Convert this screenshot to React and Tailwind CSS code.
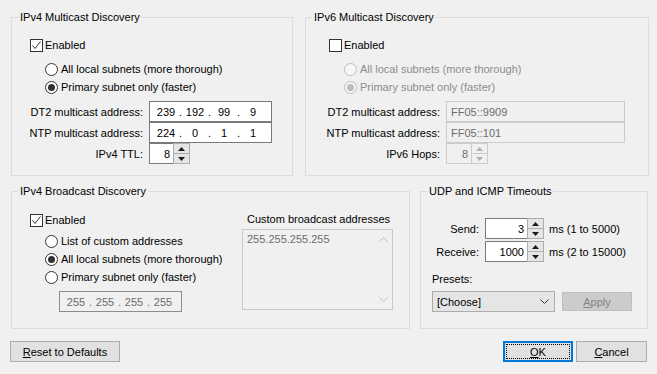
import React from "react";

function Checkbox({ checked }) {
  return (
    <span className="w-[13px] h-[13px] border border-[#333333] bg-white flex items-center justify-center shrink-0">
      {checked && (
        <svg width="11" height="11" viewBox="0 0 11 11">
          <path d="M1.5 5.5 L4 8.5 L9.5 1.5" fill="none" stroke="#333333" strokeWidth="1" />
        </svg>
      )}
    </span>
  );
}

function Radio({ checked, disabled }) {
  return (
    <span
      className={
        disabled
          ? "w-[13px] h-[13px] rounded-full border border-[#bcbcbc] bg-[#f7f7f7] flex items-center justify-center shrink-0"
          : "w-[13px] h-[13px] rounded-full border border-[#333333] bg-white flex items-center justify-center shrink-0"
      }
    >
      {checked && (
        <span
          className={
            disabled
              ? "w-[7px] h-[7px] rounded-full bg-[#bcbcbc]"
              : "w-[7px] h-[7px] rounded-full bg-[#333333]"
          }
        />
      )}
    </span>
  );
}

function RadioRow({ checked, disabled, children }) {
  return (
    <div className="flex items-center h-[18px] gap-[3px]">
      <Radio checked={checked} disabled={disabled} />
      <span className={disabled ? "text-[#8d8d8d]" : ""}>{children}</span>
    </div>
  );
}

function Tri({ up, disabled }) {
  return (
    <svg width="7" height="4" viewBox="0 0 7 4">
      <path
        d={up ? "M0 4 L3.5 0 L7 4 Z" : "M0 0 L3.5 4 L7 0 Z"}
        fill={disabled ? "#b0b0b0" : "#1a1a1a"}
      />
    </svg>
  );
}

function Spin({ value, w, disabled }) {
  return (
    <div className="flex h-[21px]" style={{ width: w }}>
      <div
        className={
          disabled
            ? "flex-1 flex items-center justify-end pr-[3px] border border-r-0 border-[#cccccc] bg-[#f0f0f0] text-[#6d6d6d]"
            : "flex-1 flex items-center justify-end pr-[3px] border border-r-0 border-[#7a7a7a] bg-white"
        }
      >
        {value}
      </div>
      <div className="w-[17px] flex flex-col">
        <div
          className={
            disabled
              ? "flex-1 flex items-center justify-center border border-[#cccccc] bg-[#f0f0f0]"
              : "flex-1 flex items-center justify-center border border-[#adadad] bg-[#e5e5e5]"
          }
        >
          <Tri up disabled={disabled} />
        </div>
        <div
          className={
            disabled
              ? "flex-1 flex items-center justify-center border border-t-0 border-[#cccccc] bg-[#f0f0f0]"
              : "flex-1 flex items-center justify-center border border-t-0 border-[#adadad] bg-[#e5e5e5]"
          }
        >
          <Tri disabled={disabled} />
        </div>
      </div>
    </div>
  );
}

function IpBox({ octets, disabled }) {
  return (
    <div
      className={
        disabled
          ? "w-[123px] h-[21px] flex items-center pl-[4px] border border-[#8c8c8c] bg-[#f0f0f0] text-[#6d6d6d]"
          : "w-[123px] h-[21px] flex items-center pl-[4px] border border-[#7a7a7a] bg-white"
      }
    >
      {octets.map((o, i) => (
        <React.Fragment key={i}>
          {i > 0 && <span className="w-[5px] text-center">.</span>}
          <span className="w-[24px] text-center">{o}</span>
        </React.Fragment>
      ))}
    </div>
  );
}

function TextBox({ value, w }) {
  return (
    <div
      className="h-[21px] flex items-center pl-[4px] border border-[#cccccc] bg-[#f0f0f0] text-[#6d6d6d]"
      style={{ width: w }}
    >
      {value}
    </div>
  );
}

function Btn({ children, w, def }) {
  return (
    <button
      className={
        def
          ? "h-[21px] border-2 border-[#0078d7] bg-[#e1e1e1] p-[1px] flex whitespace-nowrap"
          : "h-[21px] border border-[#adadad] bg-[#e1e1e1] flex items-center justify-center whitespace-nowrap"
      }
      style={{ width: w }}
    >
      {def ? (
        <span className="flex-1 border border-dotted border-black flex items-center justify-center">
          {children}
        </span>
      ) : (
        children
      )}
    </button>
  );
}

export default function App() {
  return (
    <div className="w-[657px] h-[374px] bg-[#f0f0f0] text-black text-[11px] leading-[16px] font-['Liberation_Sans',Arial,sans-serif] overflow-hidden">
      {/* top row */}
      <div className="flex pt-[9px] pl-[11px] gap-[12px]">
        <fieldset className="w-[282px] h-[167px] border border-[#dcdcdc] m-0 p-0 min-w-0">
          <legend className="ml-[6px] px-[2px] leading-[16px]">IPv4 Multicast Discovery</legend>
          <div className="pt-[12px] pl-[18px] flex items-center h-[28px] gap-[2px]">
            <Checkbox checked />
            <span>Enabled</span>
          </div>
          <div className="mt-[7px] pl-[33px]">
            <RadioRow>All local subnets (more thorough)</RadioRow>
            <RadioRow checked>Primary subnet only (faster)</RadioRow>
          </div>
          <div className="mt-[5px] flex flex-col">
            <div className="flex items-center h-[21px]">
              <span className="w-[131px] text-right">DT2 multicast address:</span>
              <div className="ml-[6px]">
                <IpBox octets={["239", "192", "99", "9"]} />
              </div>
            </div>
            <div className="flex items-center h-[21px]">
              <span className="w-[131px] text-right">NTP multicast address:</span>
              <div className="ml-[6px]">
                <IpBox octets={["224", "0", "1", "1"]} />
              </div>
            </div>
            <div className="flex items-center h-[21px]">
              <span className="w-[131px] text-right">IPv4 TTL:</span>
              <div className="ml-[6px]">
                <Spin value="8" w={41} />
              </div>
            </div>
          </div>
        </fieldset>

        <fieldset className="w-[344px] h-[167px] border border-[#dcdcdc] m-0 p-0 min-w-0">
          <legend className="ml-[6px] px-[2px] leading-[16px]">IPv6 Multicast Discovery</legend>
          <div className="pt-[12px] pl-[23px] flex items-center h-[28px] gap-[2px]">
            <Checkbox />
            <span>Enabled</span>
          </div>
          <div className="mt-[7px] pl-[38px]">
            <RadioRow disabled>All local subnets (more thorough)</RadioRow>
            <RadioRow checked disabled>Primary subnet only (faster)</RadioRow>
          </div>
          <div className="mt-[5px] flex flex-col">
            <div className="flex items-center h-[21px]">
              <span className="w-[134px] text-right">DT2 multicast address:</span>
              <div className="ml-[6px]">
                <TextBox value="FF05::9909" w={179} />
              </div>
            </div>
            <div className="flex items-center h-[21px]">
              <span className="w-[134px] text-right">NTP multicast address:</span>
              <div className="ml-[6px]">
                <TextBox value="FF05::101" w={179} />
              </div>
            </div>
            <div className="flex items-center h-[21px]">
              <span className="w-[134px] text-right">IPv6 Hops:</span>
              <div className="ml-[6px]">
                <Spin value="8" w={42} disabled />
              </div>
            </div>
          </div>
        </fieldset>
      </div>

      {/* bottom row */}
      <div className="flex mt-[7px] pl-[11px] gap-[10px]">
        <fieldset className="w-[399px] h-[146px] border border-[#dcdcdc] m-0 p-0 min-w-0">
          <legend className="ml-[6px] px-[2px] leading-[16px]">IPv4 Broadcast Discovery</legend>
          <div className="flex">
            <div className="w-[230px] pl-[18px] pt-[13px]">
              <div className="flex items-center h-[16px] gap-[2px]">
                <Checkbox checked />
                <span>Enabled</span>
              </div>
              <div className="mt-[4px] pl-[15px]">
                <RadioRow>List of custom addresses</RadioRow>
                <RadioRow checked>All local subnets (more thorough)</RadioRow>
                <RadioRow>Primary subnet only (faster)</RadioRow>
              </div>
              <div className="mt-[5px] ml-[29px]">
                <IpBox octets={["255", "255", "255", "255"]} disabled />
              </div>
            </div>
            <div className="pt-[12px]">
              <div className="h-[16px] pl-[5px]">Custom broadcast addresses</div>
              <div className="mt-[2px] w-[151px] h-[81px] border border-[#c8c8c8] bg-[#f0f0f0] flex">
                <div className="flex-1 pl-[4px] pt-[1px] text-[#6d6d6d]">255.255.255.255</div>
                <div className="w-[17px] flex flex-col justify-between items-center py-[7px]">
                  <svg width="9" height="5" viewBox="0 0 9 5">
                    <path d="M0.5 4.5 L4.5 0.5 L8.5 4.5" fill="none" stroke="#c0c0c0" strokeWidth="1" />
                  </svg>
                  <svg width="9" height="5" viewBox="0 0 9 5">
                    <path d="M0.5 0.5 L4.5 4.5 L8.5 0.5" fill="none" stroke="#c0c0c0" strokeWidth="1" />
                  </svg>
                </div>
              </div>
            </div>
          </div>
        </fieldset>

        <fieldset className="w-[228px] h-[146px] border border-[#dcdcdc] m-0 p-0 min-w-0">
          <legend className="ml-[6px] px-[2px] leading-[16px]">UDP and ICMP Timeouts</legend>
          <div className="pt-[19px] flex flex-col">
            <div className="flex items-center h-[21px]">
              <span className="w-[58px] text-right">Send:</span>
              <div className="ml-[6px]">
                <Spin value="3" w={59} />
              </div>
              <span className="ml-[5px]">ms (1 to 5000)</span>
            </div>
            <div className="flex items-center h-[21px] mt-[2px]">
              <span className="w-[58px] text-right">Receive:</span>
              <div className="ml-[6px]">
                <Spin value="1000" w={59} />
              </div>
              <span className="ml-[5px]">ms (2 to 15000)</span>
            </div>
            <div className="mt-[9px] pl-[11px] h-[16px]">Presets:</div>
            <div className="mt-[4px] pl-[11px] flex items-center gap-[7px]">
              <div className="w-[123px] h-[21px] border border-[#adadad] bg-[#e5e5e5] flex items-center justify-between pl-[4px] pr-[5px]">
                <span>[Choose]</span>
                <svg width="9" height="5" viewBox="0 0 9 5">
                  <path d="M0.5 0.5 L4.5 4.5 L8.5 0.5" fill="none" stroke="#333333" strokeWidth="1" />
                </svg>
              </div>
              <div className="w-[70px] h-[19px] border border-[#bfbfbf] bg-[#cccccc] text-[#838383] flex items-center justify-center">
                <span>
                  <span className="underline">A</span>pply
                </span>
              </div>
            </div>
          </div>
        </fieldset>
      </div>

      {/* buttons */}
      <div className="flex justify-between items-center mt-[12px] pl-[10px] pr-[10px]">
        <Btn w={110}>
          <span>
            <span className="underline">R</span>eset to Defaults
          </span>
        </Btn>
        <div className="flex gap-[3px]">
          <Btn w={70} def>
            <span>
              <span className="underline">O</span>K
            </span>
          </Btn>
          <Btn w={71}>
            <span>
              <span className="underline">C</span>ancel
            </span>
          </Btn>
        </div>
      </div>
    </div>
  );
}
